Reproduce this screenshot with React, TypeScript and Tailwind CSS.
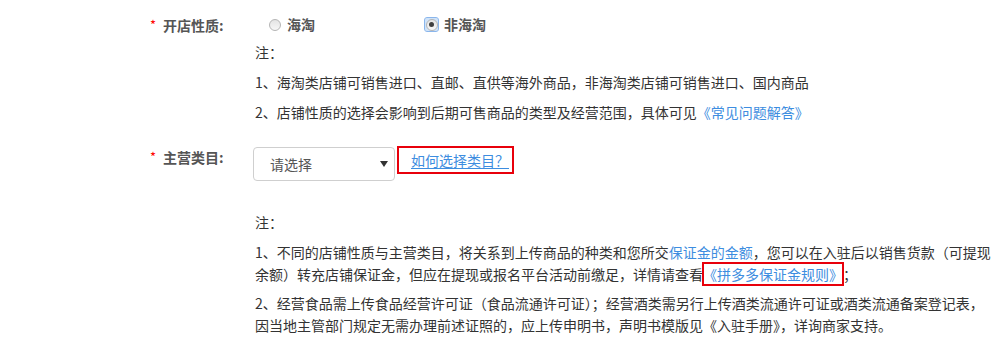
const FONT = { fontFamily: '"Microsoft YaHei", "Noto Sans CJK SC", "Noto Sans", sans-serif' };

function Radio({ checked }: { checked?: boolean }) {
  return (
    <span
      className={
        checked
          ? "flex h-[13px] w-[13px] items-center justify-center rounded-[2px] bg-[#cfe3f9] outline outline-1 outline-[#8ab6ec]"
          : "flex h-[13px] w-[13px] items-center justify-center"
      }
    >
      <span className="flex h-[12px] w-[12px] items-center justify-center rounded-full border border-[#b5b5b5] bg-gradient-to-b from-[#e4e4e4] to-[#f7f7f7]">
        {checked ? <span className="h-[5px] w-[5px] rounded-full bg-[#3f3f3f]" /> : null}
      </span>
    </span>
  );
}

function Label({ text }: { text: string }) {
  return (
    <div className="flex w-[105px] shrink-0 items-center leading-[20px]">
      <span className="w-[13px] text-[13px] text-[#ff0000]">*</span>
      <span className="text-[14px] font-bold text-[#555]">{text}</span>
    </div>
  );
}

export default function App() {
  return (
    <div className="min-h-[339px] w-[998px] bg-white pl-[150px] text-[14px] text-[#333]" style={FONT}>
      {/* 开店性质 */}
      <div className="flex h-[25px] items-center pt-0 mt-[12px]">
        <Label text="开店性质:" />
        <div className="flex items-center pl-[13px]">
          <label className="flex w-[157px] items-center gap-[6px]">
            <Radio />
            <span className="font-bold text-[#555]">海淘</span>
          </label>
          <label className="flex items-center gap-[6px]">
            <Radio checked />
            <span className="font-bold text-[#555]">非海淘</span>
          </label>
        </div>
      </div>
      <div className="ml-[105px] leading-[30px]">
        <p>注：</p>
        <p className="whitespace-nowrap">1、海淘类店铺可销售进口、直邮、直供等海外商品，非海淘类店铺可销售进口、国内商品</p>
        <p className="whitespace-nowrap">
          2、店铺性质的选择会影响到后期可售商品的类型及经营范围，具体可见
          <a className="text-[#3d8de0]">《常见问题解答》</a>
        </p>
      </div>

      {/* 主营类目 */}
      <div className="mt-[20px] flex items-start">
        <div className="mt-0">
          <Label text="主营类目:" />
        </div>
        <div className="-ml-[2px] flex h-[34px] w-[142px] items-center justify-between rounded-[4px] border border-[#cfcfcf] pl-[16px] pr-[6px]">
          <span className="text-[#555]">请选择</span>
          <svg width="8" height="6" viewBox="0 0 8 6">
            <path d="M0 0 H8 L4 6 Z" fill="#333" />
          </svg>
        </div>
        <div className="-mt-[1px] ml-[2px] flex h-[28px] items-center border-2 border-[#e8000b] pl-[12px] pr-[3px]">
          <a className="text-[#3d8de0] underline underline-offset-2">如何选择类目？</a>
        </div>
      </div>

      <div className="ml-[105px] mt-[26px]">
        <p className="leading-[30px]">注：</p>
        <div className="mt-[4px] leading-[22px]">
          <p className="whitespace-nowrap">
            1、不同的店铺性质与主营类目，将关系到上传商品的种类和您所交
            <a className="text-[#3d8de0]">保证金的金额</a>
            ，您可以在入驻后以销售货款（可提现
          </p>
          <p className="whitespace-nowrap">
            余额）转充店铺保证金，但应在提现或报名平台活动前缴足，详情请查看
            <a className="inline-block text-[#3d8de0] outline-2 outline-offset-[-1px] outline-[#e8000b]">
              《拼多多保证金规则》
            </a>
            ；
          </p>
        </div>
        <div className="mt-[7px] leading-[22px]">
          <p className="whitespace-nowrap">
            2、经营食品需上传食品经营许可证（食品流通许可证）；经营酒类需另行上传酒类流通许可证或酒类流通备案登记表，
          </p>
          <p className="whitespace-nowrap">
            因当地主管部门规定无需办理前述证照的，应上传申明书，声明书模版见《入驻手册》，详询商家支持。
          </p>
        </div>
      </div>
    </div>
  );
}
